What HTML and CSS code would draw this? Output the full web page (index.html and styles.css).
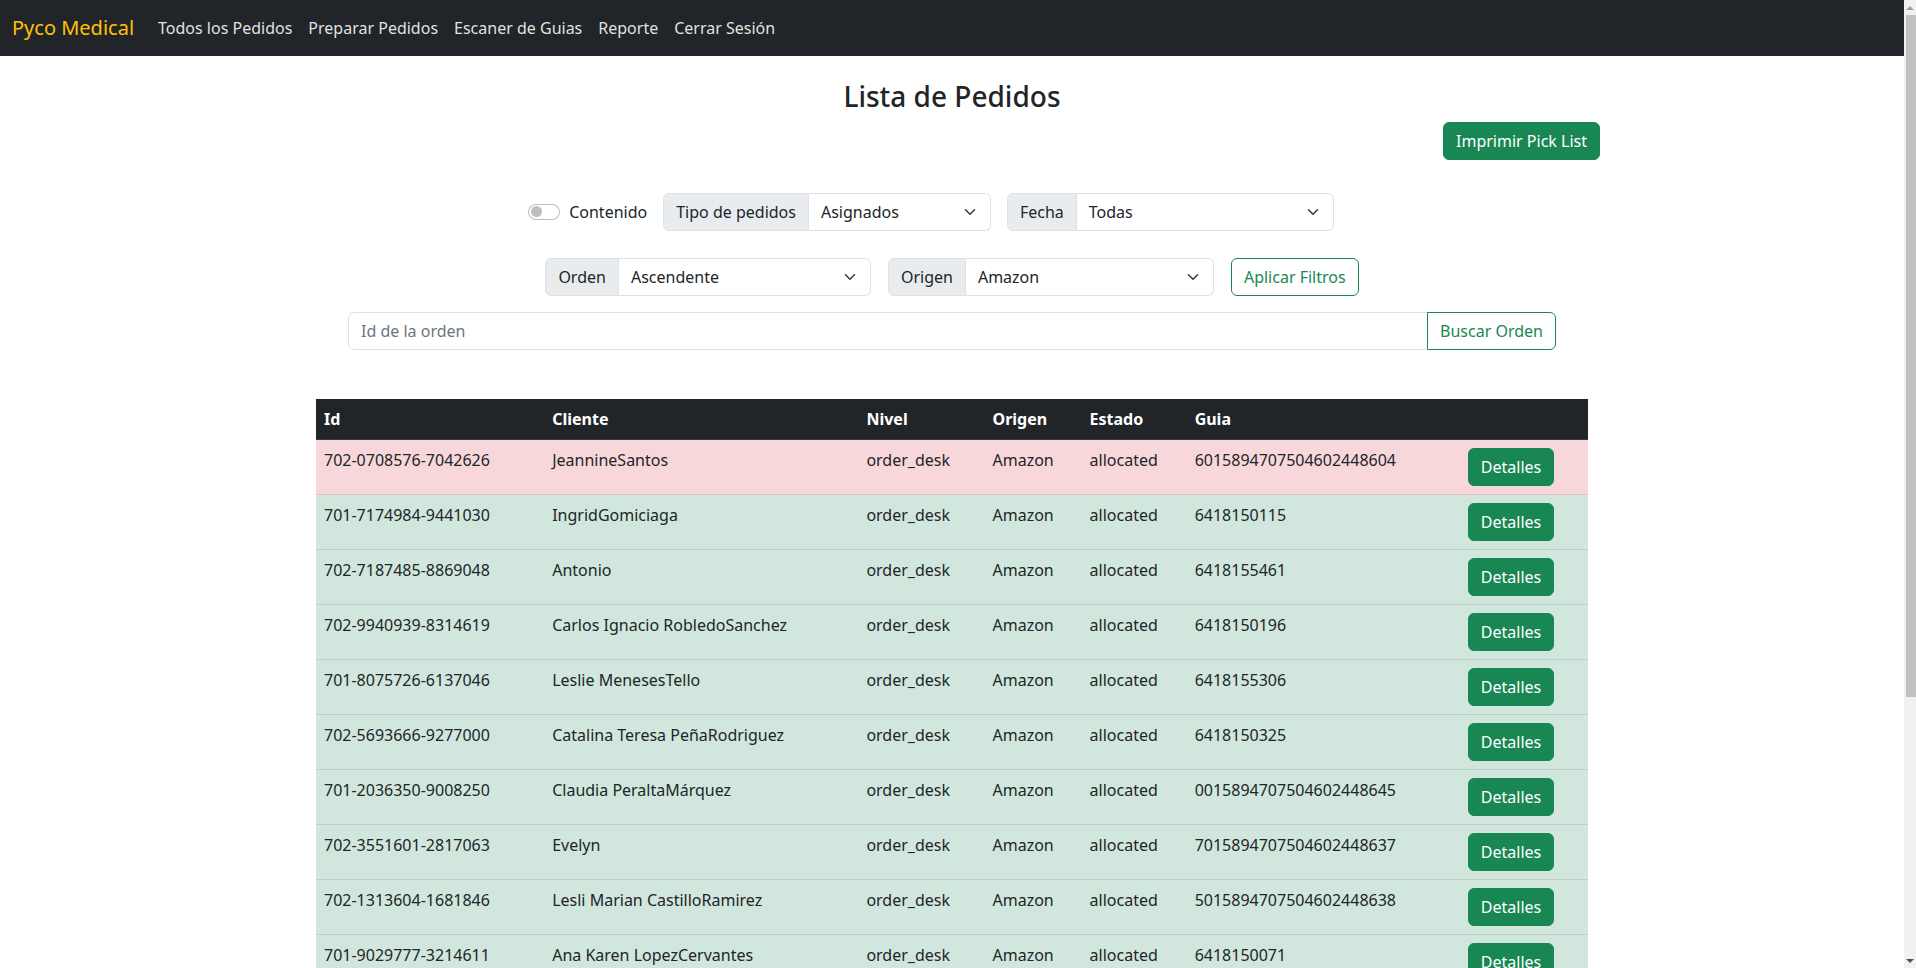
FILE: index.html
```html
<!DOCTYPE html>
<html lang="es">
<head>
<meta charset="utf-8">
<title>Lista de Pedidos</title>
<link rel="stylesheet" href="styles.css">
</head>
<body>
<nav class="navbar">
  <a class="brand" href="#">Pyco Medical</a>
  <ul class="nav-links">
    <li><a href="#">Todos los Pedidos</a></li>
    <li><a href="#">Preparar Pedidos</a></li>
    <li><a href="#">Escaner de Guias</a></li>
    <li><a href="#">Reporte</a></li>
    <li><a href="#">Cerrar Sesión</a></li>
  </ul>
</nav>

<main class="container">
  <h3 class="title">Lista de Pedidos</h3>
  <div class="toolbar">
    <button class="btn btn-success">Imprimir Pick List</button>
  </div>

  <div class="filters filters-1">
    <label class="switch">
      <span class="switch-track"><span class="switch-knob"></span></span>
      <span class="switch-label">Contenido</span>
    </label>
    <div class="input-group">
      <span class="addon">Tipo de pedidos</span>
      <div class="select select-tipo"><span class="select-text">Asignados</span><svg class="chev" viewBox="0 0 16 16" width="16" height="12"><path d="m2 5 6 6 6-6" fill="none" stroke="#343a40" stroke-linecap="round" stroke-linejoin="round" stroke-width="2"/></svg></div>
    </div>
    <div class="input-group">
      <span class="addon">Fecha</span>
      <div class="select select-fecha"><span class="select-text">Todas</span><svg class="chev" viewBox="0 0 16 16" width="16" height="12"><path d="m2 5 6 6 6-6" fill="none" stroke="#343a40" stroke-linecap="round" stroke-linejoin="round" stroke-width="2"/></svg></div>
    </div>
  </div>

  <div class="filters filters-2">
    <div class="input-group">
      <span class="addon">Orden</span>
      <div class="select select-orden"><span class="select-text">Ascendente</span><svg class="chev" viewBox="0 0 16 16" width="16" height="12"><path d="m2 5 6 6 6-6" fill="none" stroke="#343a40" stroke-linecap="round" stroke-linejoin="round" stroke-width="2"/></svg></div>
    </div>
    <div class="input-group">
      <span class="addon">Origen</span>
      <div class="select select-origen"><span class="select-text">Amazon</span><svg class="chev" viewBox="0 0 16 16" width="16" height="12"><path d="m2 5 6 6 6-6" fill="none" stroke="#343a40" stroke-linecap="round" stroke-linejoin="round" stroke-width="2"/></svg></div>
    </div>
    <button class="btn btn-outline">Aplicar Filtros</button>
  </div>

  <div class="search">
    <input class="search-input" type="text" placeholder="Id de la orden">
    <button class="btn btn-outline btn-search">Buscar Orden</button>
  </div>

  <div class="table-wrap">
    <table class="orders">
      <colgroup>
        <col class="c-id"><col class="c-cliente"><col class="c-nivel"><col class="c-origen"><col class="c-estado"><col class="c-guia"><col class="c-btn">
      </colgroup>
      <thead>
        <tr><th>Id</th><th>Cliente</th><th>Nivel</th><th>Origen</th><th>Estado</th><th>Guia</th><th></th></tr>
      </thead>
      <tbody>
        <tr class="row-danger"><td>702-0708576-7042626</td><td>JeannineSantos</td><td>order_desk</td><td>Amazon</td><td>allocated</td><td>6015894707504602448604</td><td><button class="btn btn-success">Detalles</button></td></tr>
        <tr class="row-success"><td>701-7174984-9441030</td><td>IngridGomiciaga</td><td>order_desk</td><td>Amazon</td><td>allocated</td><td>6418150115</td><td><button class="btn btn-success">Detalles</button></td></tr>
        <tr class="row-success"><td>702-7187485-8869048</td><td>Antonio</td><td>order_desk</td><td>Amazon</td><td>allocated</td><td>6418155461</td><td><button class="btn btn-success">Detalles</button></td></tr>
        <tr class="row-success"><td>702-9940939-8314619</td><td>Carlos Ignacio RobledoSanchez</td><td>order_desk</td><td>Amazon</td><td>allocated</td><td>6418150196</td><td><button class="btn btn-success">Detalles</button></td></tr>
        <tr class="row-success"><td>701-8075726-6137046</td><td>Leslie MenesesTello</td><td>order_desk</td><td>Amazon</td><td>allocated</td><td>6418155306</td><td><button class="btn btn-success">Detalles</button></td></tr>
        <tr class="row-success"><td>702-5693666-9277000</td><td>Catalina Teresa PeñaRodriguez</td><td>order_desk</td><td>Amazon</td><td>allocated</td><td>6418150325</td><td><button class="btn btn-success">Detalles</button></td></tr>
        <tr class="row-success"><td>701-2036350-9008250</td><td>Claudia PeraltaMárquez</td><td>order_desk</td><td>Amazon</td><td>allocated</td><td>0015894707504602448645</td><td><button class="btn btn-success">Detalles</button></td></tr>
        <tr class="row-success"><td>702-3551601-2817063</td><td>Evelyn</td><td>order_desk</td><td>Amazon</td><td>allocated</td><td>7015894707504602448637</td><td><button class="btn btn-success">Detalles</button></td></tr>
        <tr class="row-success"><td>702-1313604-1681846</td><td>Lesli Marian CastilloRamirez</td><td>order_desk</td><td>Amazon</td><td>allocated</td><td>5015894707504602448638</td><td><button class="btn btn-success">Detalles</button></td></tr>
        <tr class="row-success"><td>701-9029777-3214611</td><td>Ana Karen LopezCervantes</td><td>order_desk</td><td>Amazon</td><td>allocated</td><td>6418150071</td><td><button class="btn btn-success">Detalles</button></td></tr>
      </tbody>
    </table>
  </div>
</main>

<div class="scrollbar" aria-hidden="true">
  <span class="sb-arrow sb-up"></span>
  <span class="sb-thumb"></span>
  <span class="sb-rest"></span>
  <span class="sb-arrow sb-down"></span>
</div>
</body>
</html>
```

FILE: styles.css
```css
* { box-sizing: border-box; }

body {
  margin: 0 12px 0 0;
  font-family: "Noto Sans", "Open Sans", sans-serif;
  font-size: 16px;
  line-height: 1.5;
  color: #212529;
  background: #fff;
}

/* Navbar */
.navbar {
  display: flex;
  align-items: center;
  height: 56px;
  padding: 0 12px;
  background: #212529;
}
.brand {
  font-size: 20px;
  line-height: 30px;
  color: #ffc107;
  text-decoration: none;
  margin-right: 16px;
}
.nav-links {
  display: flex;
  list-style: none;
  margin: 0;
  padding: 0;
}
.nav-links a {
  display: block;
  padding: 8px;
  color: rgba(255, 255, 255, 0.88);
  text-decoration: none;
}

/* Layout */
.container {
  max-width: 1320px;
  margin: 0 auto;
  padding: 0 12px 40px;
}
.title {
  margin: 24px 0 0;
  text-align: center;
  font-size: 28px;
  line-height: 1.2;
  font-weight: 500;
}
.toolbar {
  display: flex;
  justify-content: flex-end;
  margin-top: 8px;
}

/* Buttons */
.btn {
  font-family: inherit;
  font-size: 16px;
  line-height: 24px;
  padding: 6px 12px;
  border: 1px solid transparent;
  border-radius: 6px;
  cursor: pointer;
}
.btn-success {
  background: #198754;
  border-color: #198754;
  color: #fff;
}
.btn-outline {
  background: #fff;
  border-color: #198754;
  color: #198754;
}

/* Filters */
.filters {
  display: flex;
  justify-content: center;
  align-items: center;
  gap: 16px;
}
.filters-1 {
  margin-top: 33px;
  padding-right: 42px;
}
.filters-2 {
  margin-top: 27px;
  gap: 17px;
}
.switch {
  display: flex;
  align-items: center;
  gap: 9px;
}
.switch-track {
  display: flex;
  align-items: center;
  width: 32px;
  height: 16px;
  padding: 0 2px;
  border: 1px solid rgba(0, 0, 0, 0.25);
  border-radius: 16px;
  background: #fff;
}
.switch-knob {
  width: 11px;
  height: 11px;
  border-radius: 50%;
  background: rgba(0, 0, 0, 0.25);
}
.input-group {
  display: flex;
}
.addon {
  padding: 6px 12px;
  background: #e9ecef;
  border: 1px solid #dee2e6;
  border-radius: 6px 0 0 6px;
  white-space: nowrap;
}
.select {
  display: flex;
  align-items: center;
  padding: 6px 12px;
  border: 1px solid #dee2e6;
  border-left: 0;
  border-radius: 0 6px 6px 0;
  background: #fff;
}
.select-text { flex: 1; }
.chev { display: block; }
.select-tipo { width: 182px; }
.select-fecha { width: 257px; }
.select-orden { width: 252px; }
.select-origen { width: 248px; }

/* Search */
.search {
  display: flex;
  margin: 16px 44px 0;
}
.search-input {
  flex: 1;
  font-family: inherit;
  font-size: 16px;
  line-height: 24px;
  padding: 6px 12px;
  border: 1px solid #dee2e6;
  border-radius: 6px 0 0 6px;
  color: #212529;
  outline: none;
}
.search-input::placeholder { color: #6c757d; }
.btn-search {
  border-radius: 0 6px 6px 0;
  margin-left: -1px;
}

/* Table */
.table-wrap {
  margin-top: 49px;
  padding: 0 12px;
}
.orders {
  width: 100%;
  border-collapse: collapse;
  table-layout: fixed;
}
.c-id { width: 228px; }
.c-cliente { width: 314px; }
.c-nivel { width: 126px; }
.c-origen { width: 97px; }
.c-estado { width: 105px; }
.c-guia { width: 273px; }
.c-btn { width: 128px; }
.orders th {
  background: #212529;
  color: #fff;
  text-align: left;
  font-weight: 700;
  padding: 8px;
  border-bottom: 1px solid #373b3e;
}
.orders td {
  padding: 8px;
  vertical-align: top;
  border-bottom: 1px solid;
  white-space: nowrap;
}
.row-danger td {
  background: #f8d7da;
  border-color: #dfc2c4;
}
.row-success td {
  background: #d1e7dd;
  border-color: #bcd0c7;
}

/* Fake browser scrollbar (overlay at right edge) */
.scrollbar {
  position: fixed;
  top: 0;
  right: 0;
  width: 12px;
  height: 100vh;
  display: flex;
  flex-direction: column;
  background: #f1f1f1;
}
.sb-arrow {
  height: 15px;
  display: flex;
  justify-content: center;
  align-items: center;
}
.sb-up::before {
  content: "";
  border-left: 4px solid transparent;
  border-right: 4px solid transparent;
  border-bottom: 4px solid #a3a3a3;
}
.sb-down::before {
  content: "";
  border-left: 4px solid transparent;
  border-right: 4px solid transparent;
  border-top: 4px solid #505050;
}
.sb-thumb {
  height: 682px;
  margin-left: 2px;
  background: #c1c1c1;
}
.sb-rest { flex: 1; }
```
